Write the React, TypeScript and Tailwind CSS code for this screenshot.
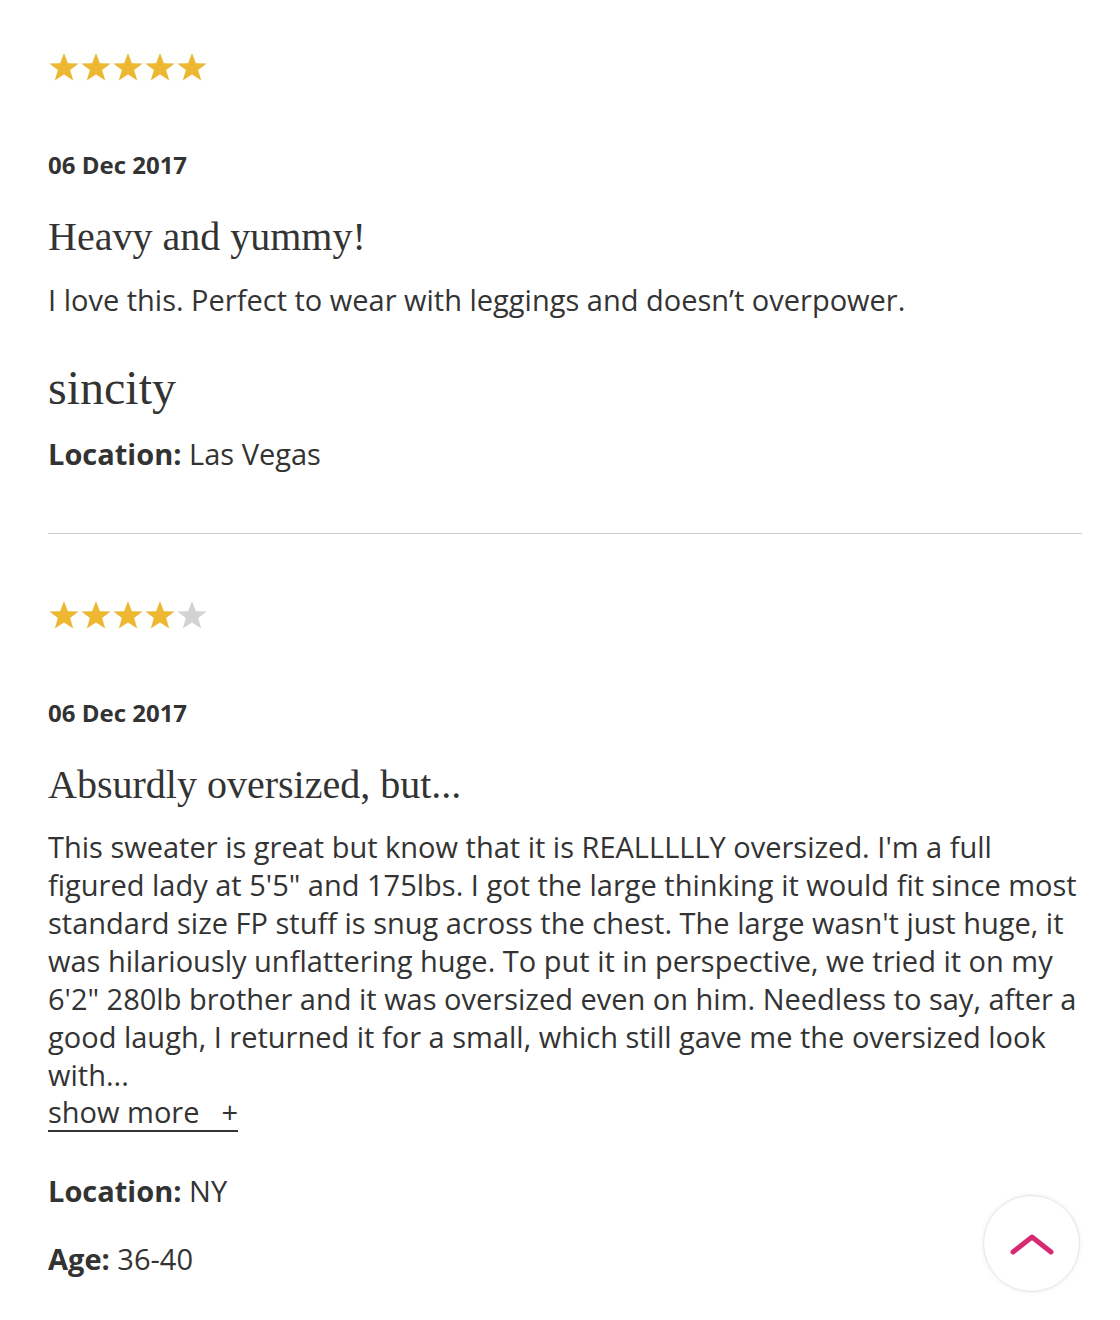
const reviews = [
  {
    rating: 5,
    date: '06 Dec 2017',
    title: 'Heavy and yummy!',
    body: 'I love this. Perfect to wear with leggings and doesn’t overpower.',
    author: 'sincity',
    location: 'Las Vegas',
  },
  {
    rating: 4,
    date: '06 Dec 2017',
    title: 'Absurdly oversized, but...',
    body: 'This sweater is great but know that it is REALLLLLY oversized. I\'m a full figured lady at 5\'5" and 175lbs. I got the large thinking it would fit since most standard size FP stuff is snug across the chest. The large wasn\'t just huge, it was hilariously unflattering huge. To put it in perspective, we tried it on my 6\'2" 280lb brother and it was oversized even on him. Needless to say, after a good laugh, I returned it for a small, which still gave me the oversized look with...',
    location: 'NY',
    age: '36-40',
  },
]

const sans = "font-['Open_Sans',sans-serif]"
const serif = "font-['Liberation_Serif','DejaVu_Serif',serif]"

function Star({ on }: { on: boolean }) {
  return (
    <svg width="32" height="32" viewBox="0 0 24 24">
      <polygon points="12,1.5 14.9,9.2 23,9.3 16.6,14.3 18.9,22.2 12,17.6 5.1,22.2 7.4,14.3 1,9.3 9.1,9.2" fill={on ? '#ecb832' : '#d3d3d3'} />
    </svg>
  )
}

function Stars({ n }: { n: number }) {
  return <div className="flex h-[32px]">{[0, 1, 2, 3, 4].map(i => <Star key={i} on={i < n} />)}</div>
}

export default function App() {
  const [a, b] = reviews
  return (
    <div className={`min-h-[1320px] bg-white pl-[48px] pr-[38px] pt-[51px] text-[#333] ${sans}`}>
      <div>
        <Stars n={a.rating} />
        <p className="mt-[66px] text-[24px] font-bold leading-[32px]">{a.date}</p>
        <h2 className={`mt-[32px] text-[40px] leading-[48px] ${serif}`}>{a.title}</h2>
        <p className="mt-[20px] text-[29px] leading-[38px]">{a.body}</p>
        <p className={`mt-[41px] text-[48px] leading-[56px] ${serif}`}>{a.author}</p>
        <p className="mt-[19px] text-[29px] leading-[38px]"><span className="font-bold">Location:</span> {a.location}</p>
      </div>
      <div className="mt-[60px] border-t border-[#cccccc]" />
      <div className="pt-[65px]">
        <Stars n={b.rating} />
        <p className="mt-[66px] text-[24px] font-bold leading-[32px]">{b.date}</p>
        <h2 className={`mt-[32px] text-[40px] leading-[48px] ${serif}`}>{b.title}</h2>
        <p className="mt-[19px] text-[29px] leading-[38px]">{b.body}</p>
        <button className="flex h-[38px] items-center gap-[22px] border-b-2 border-[#333] text-[29px] leading-[36px]">
          <span>show more</span><span>+</span>
        </button>
        <p className="mt-[40px] text-[29px] leading-[38px]"><span className="font-bold">Location:</span> {b.location}</p>
        <p className="mt-[30px] text-[29px] leading-[38px]"><span className="font-bold">Age:</span> {b.age}</p>
      </div>
      <button className="fixed bottom-[28px] right-[40px] flex h-[97px] w-[97px] items-center justify-center rounded-full border border-[#e6e6e6] bg-white shadow-[0_0_4px_rgba(0,0,0,0.08)]">
        <svg width="44" height="22" viewBox="0 0 44 22">
          <polyline points="3,19 22,4 41,19" fill="none" stroke="#d62a73" strokeWidth="5" strokeLinecap="round" strokeLinejoin="round" />
        </svg>
      </button>
    </div>
  )
}
